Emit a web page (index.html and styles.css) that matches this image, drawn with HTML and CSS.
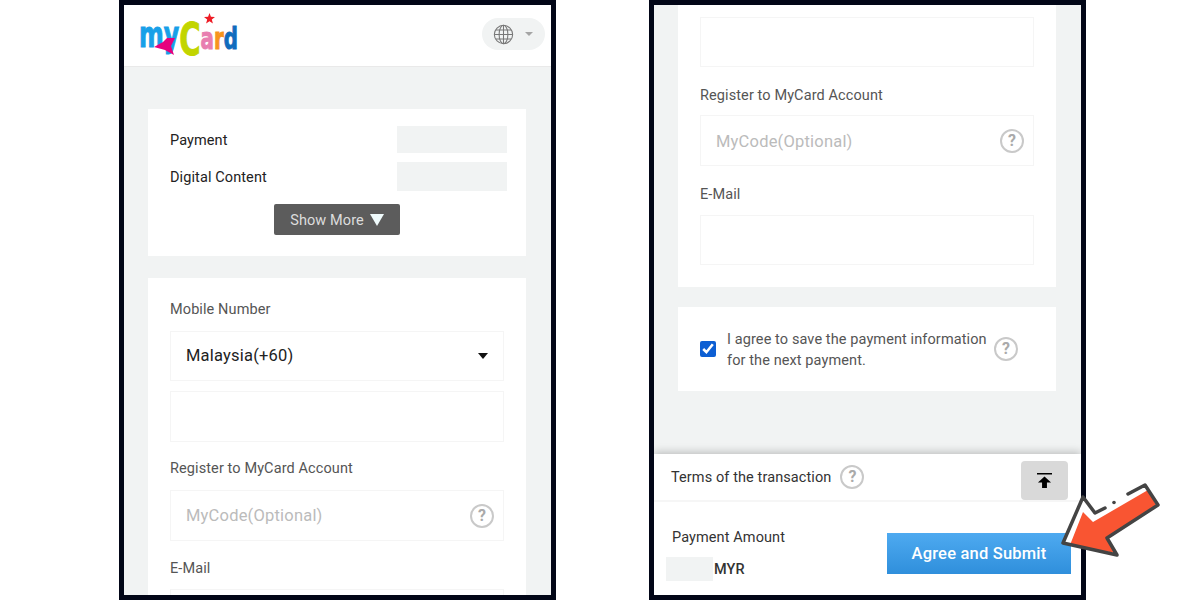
FILE: index.html
```html
<!DOCTYPE html>
<html lang="en">

<head>
    <meta charset="UTF-8">
    <meta name="viewport" content="width=device-width, initial-scale=1.0">
    <title>MyCard</title>
    <link rel="stylesheet" href="styles.css">
</head>

<body>
    <!-- Left phone -->
    <div class="phone">
        <div class="header">
            <div class="logo">
                <div class="logo-text">
                    <span class="l-blue">m</span><span class="l-blue">y</span><span class="l-lime">C</span><span class="l-pink">a</span><span class="l-orange">r</span><span class="l-dark">d</span>
                </div>
                <svg class="logo-star" viewBox="0 0 20 20"><polygon points="10,0 12.6,6.800 20,7.200 14.200,11.800 16.200,19 10,15 3.800,19 5.800,11.800 0,7.200 7.400,6.800" /></svg>
                <svg class="logo-tail" viewBox="0 0 23 20"><polygon points="0,11 9,6 13,2 21,2 17,10 20,19 11,14" /></svg>
            </div>
            <div class="lang-btn">
                <svg class="globe" viewBox="0 0 22 22">
                    <circle cx="11" cy="11" r="9.600" />
                    <ellipse cx="11" cy="11" rx="4.600" ry="9.600" />
                    <path d="M11 1.400V20.600M1.400 11H20.600M2.800 6.200H19.200M2.800 15.800H19.200" />
                </svg>
                <span class="lang-caret"></span>
            </div>
        </div>

        <div class="scroller scroller-left">
            <div class="card card-info">
                <div class="info-row">
                    <span class="info-label">Payment</span>
                    <span class="blank-box"></span>
                </div>
                <div class="info-row">
                    <span class="info-label">Digital Content</span>
                    <span class="blank-box blank-tall"></span>
                </div>
                <div class="show-more">Show More <span class="show-arrow"></span></div>
            </div>

            <div class="card card-form">
                <p class="field-label">Mobile Number</p>
                <div class="select-wrap">
                    <select class="field field-select">
                        <option>Malaysia(+60)</option>
                    </select>
                </div>
                <input class="field field-gap" type="text">
                <p class="field-label">Register to MyCard Account</p>
                <div class="input-help">
                    <input class="field" type="text" placeholder="MyCode(Optional)">
                    <span class="help-icon">?</span>
                </div>
                <p class="field-label">E-Mail</p>
                <input class="field" type="text">
            </div>
        </div>
    </div>

    <!-- Right phone -->
    <div class="phone">
        <div class="scroller scroller-right">
            <div class="card card-form card-rest">
                <input class="field" type="text">
                <p class="field-label">Register to MyCard Account</p>
                <div class="input-help">
                    <input class="field" type="text" placeholder="MyCode(Optional)">
                    <span class="help-icon">?</span>
                </div>
                <p class="field-label">E-Mail</p>
                <input class="field" type="text">
            </div>

            <div class="card card-save">
                <input class="save-check" type="checkbox" checked>
                <p class="save-text">I agree to save the payment information for the next payment.</p>
                <span class="help-icon">?</span>
            </div>
        </div>

        <div class="bottom-panel">
            <div class="terms-row">
                <span>Terms of the transaction</span>
                <span class="help-icon">?</span>
                <div class="top-btn">
                    <svg viewBox="0 0 16 18"><path d="M0 1H16V2.600H0ZM8 4.600L15 11H10.600V17H5.400V11H1Z" /></svg>
                </div>
            </div>
            <div class="amount-row">
                <div class="amount-info">
                    <p class="amount-label">Payment Amount</p>
                    <div class="amount-value"><span class="blank-amount"></span>MYR</div>
                </div>
                <div class="submit-btn">Agree and Submit</div>
            </div>
        </div>
    </div>

    <!-- Flecha roja encima -->
    <svg class="red-arrow" viewBox="1055 478 110 84">
        <polygon class="arrow-back" points="1063,543 1083,497 1095,513 1145,485 1158,505 1107,538 1117,555" />
        <polygon class="arrow-fill" points="1070,545 1083,512 1093,522 1148,490 1156,505 1106,538 1115,553" />
        <path class="arrow-line" d="M1105,508 L1095,513 L1083,497 L1063,543 L1117,555 L1107,538 L1158,505 L1145,485 L1128,494" />
        <circle class="arrow-dot" cx="1114" cy="502.500" r="1.800" />
    </svg>
</body>

</html>
```
FILE: styles.css
```css
* {
    box-sizing: border-box;
}

body {
    font-family: 'Roboto', sans-serif;
    letter-spacing: 0.1px;
    margin: 0;
    padding-left: 119px;
    background-color: #fff;
    display: flex;
    gap: 93px;
    height: 600px;
    overflow: hidden;
    position: relative;
}

p {
    margin: 0;
}

.phone {
    width: 437px;
    height: 600px;
    border: 5px solid #020617;
    background-color: #f1f3f3;
    display: flex;
    flex-direction: column;
    overflow: hidden;
}

/* Header */
.header {
    flex: none;
    height: 62px;
    padding: 13px 6px 0 15px;
    background-color: #fff;
    border-bottom: 1px solid #e9e9e9;
    display: flex;
    justify-content: space-between;
    align-items: flex-start;
}

.logo {
    position: relative;
    width: 98px;
    height: 36px;
}

.logo-text {
    display: flex;
    align-items: baseline;
    width: 150px;
    height: 36px;
    font-family: 'DejaVu Sans', sans-serif;
    font-weight: bold;
    font-size: 36px;
    line-height: 36px;
    letter-spacing: 0;
    white-space: nowrap;
    -webkit-text-stroke: 1px currentColor;
    transform: scaleX(0.66);
    transform-origin: left top;
}

.logo-text span {
    position: relative;
    top: -4px;
}

.l-blue {
    color: #18a0e8;
}

.logo-text .l-lime {
    color: #c2d500;
    font-size: 44px;
    top: 4px;
}

.logo-text .l-pink {
    color: #e87fb0;
    font-size: 30px;
    top: -2px;
}

.logo-text .l-orange {
    color: #f7941d;
    font-size: 30px;
    top: -2px;
}

.logo-text .l-dark {
    color: #0f6cbd;
    font-size: 30px;
    top: -2px;
}

.logo-star {
    position: absolute;
    left: 65px;
    top: -5px;
    width: 11px;
    height: 11px;
    fill: #ee1c25;
}

.logo-tail {
    position: absolute;
    left: 15px;
    top: 18px;
    width: 23px;
    height: 20px;
    fill: #e6007e;
}

.lang-btn {
    width: 63px;
    height: 32px;
    border-radius: 16px;
    background-color: #f1f3f3;
    display: flex;
    align-items: center;
    padding-left: 11px;
    gap: 11px;
}

.globe {
    width: 21px;
    height: 21px;
    fill: none;
    stroke: #777;
    stroke-width: 1.100;
}

.lang-caret {
    border-left: 4px solid transparent;
    border-right: 4px solid transparent;
    border-top: 4.500px solid #a5a5a5;
}

/* Content */
.scroller {
    flex: 1;
    min-height: 0;
    padding: 0 25px 0 24px;
    overflow: hidden;
}

.scroller-left {
    padding-top: 42px;
}

.card {
    background-color: #fff;
}

.card-info {
    height: 147px;
    padding: 17px 19px 0 22px;
    margin-bottom: 22px;
    color: #222;
    font-size: 14.500px;
}

.info-row {
    display: flex;
    justify-content: space-between;
    align-items: center;
    margin-bottom: 9px;
}

.info-label {
    padding-top: 2px;
}

.blank-box {
    width: 110px;
    height: 27px;
    background-color: #f1f3f3;
}

.blank-tall {
    height: 29px;
}

.show-more {
    width: 126px;
    height: 31px;
    margin: 13px 0 0 104px;
    padding-top: 1px;
    border-radius: 2px;
    background-color: #5c5c5c;
    color: #ddd;
    display: flex;
    align-items: center;
    justify-content: center;
    gap: 6px;
}

.show-arrow {
    border-left: 7px solid transparent;
    border-right: 7px solid transparent;
    border-top: 12px solid #f0fbfc;
}

.card-form {
    padding: 22px;
}

.card-rest {
    padding-top: 12px;
    margin-bottom: 20px;
}

.field-label {
    height: 18px;
    line-height: 20px;
    margin: 17px 0 13px;
    color: #555;
    font-size: 14.500px;
}

.card-form > .field-label:first-child {
    margin-top: 0;
}

.input-help + .field-label {
    line-height: 22px;
}

.card-rest .field-label {
    line-height: 22px;
    margin: 18px 0 12px;
}

.card-rest > .field:first-child {
    height: 50px;
}

.card-rest > .field:last-child {
    height: 50px;
    margin-top: 13px;
}

.card-rest .input-help .field {
    padding-top: 2px;
}

.field {
    display: block;
    width: 334px;
    height: 51px;
    padding: 0 15px;
    border: 1px solid #f5f5f5;
    background-color: #fff;
    color: #222;
    font-family: 'Roboto', sans-serif;
    font-size: 16.500px;
    letter-spacing: 0.2px;
    outline: none;
}

.field::placeholder {
    color: #bbb;
}

.field-gap {
    margin-top: 10px;
}

.select-wrap {
    position: relative;
}

.select-wrap::after {
    content: "";
    position: absolute;
    left: 308px;
    top: 22px;
    border-left: 5px solid transparent;
    border-right: 5px solid transparent;
    border-top: 6px solid #111;
}

.field-select {
    appearance: none;
    height: 50px;
    padding-bottom: 2px;
    border-radius: 0;
}

.input-help {
    position: relative;
}

.input-help .help-icon {
    position: absolute;
    right: 10px;
    top: 14px;
}

.help-icon {
    flex: none;
    width: 24px;
    height: 24px;
    border: 2px solid #c9c9c9;
    border-radius: 50%;
    color: #aaa;
    font-size: 16px;
    font-weight: bold;
    line-height: 20px;
    text-align: center;
}

.card-save {
    height: 84px;
    padding: 0 38px 0 22px;
    display: flex;
    align-items: center;
    color: #555;
    font-size: 14.500px;
    line-height: 21px;
}

.save-check {
    flex: none;
    width: 16px;
    height: 16px;
    margin: 0 11px 0 0;
    accent-color: #0d5fd3;
}

.save-text {
    width: 267px;
    padding-top: 2px;
}

/* Panel inferior */
.bottom-panel {
    flex: none;
    height: 141px;
    background-color: #fff;
    box-shadow: 0 -2px 8px rgba(0, 0, 0, 0.22);
    position: relative;
}

.terms-row {
    height: 48px;
    padding: 0 13px 0 17px;
    border-bottom: 2px solid #f6f6f6;
    display: flex;
    align-items: center;
    color: #333;
    font-size: 14.500px;
}

.terms-row .help-icon {
    margin-left: 9px;
}

.top-btn {
    align-self: flex-start;
    width: 47px;
    height: 39px;
    margin-left: auto;
    margin-top: 7px;
    border-radius: 4px;
    background-color: #d9d9d9;
    display: flex;
    align-items: center;
    justify-content: center;
}

.top-btn svg {
    width: 15px;
    height: 17px;
}

.amount-row {
    display: flex;
    justify-content: space-between;
    padding: 27px 10px 0 12px;
}

.amount-label {
    color: #333;
    font-size: 14.500px;
    line-height: 17px;
    margin-left: 6px;
}

.amount-value {
    display: flex;
    align-items: center;
    margin-top: 11px;
    color: #333;
    font-size: 14.500px;
    font-weight: 500;
}

.blank-amount {
    width: 47px;
    height: 24px;
    margin-right: 1px;
    background-color: #f1f3f3;
}

.submit-btn {
    width: 184px;
    height: 41px;
    margin-top: 4px;
    background: linear-gradient(#4eaaf0, #2f8fdc);
    color: #fff;
    font-size: 16.500px;
    font-weight: 500;
    letter-spacing: 0.2px;
    line-height: 41px;
    text-align: center;
}

/* Flecha */
.red-arrow {
    position: absolute;
    left: 1055px;
    top: 478px;
    width: 110px;
    height: 84px;
}

.arrow-back {
    fill: #fff;
}

.arrow-fill {
    fill: #f95532;
}

.arrow-line {
    fill: none;
    stroke: #444;
    stroke-width: 3.500;
    stroke-linejoin: round;
    stroke-linecap: round;
}

.arrow-dot {
    fill: #444;
}
```
